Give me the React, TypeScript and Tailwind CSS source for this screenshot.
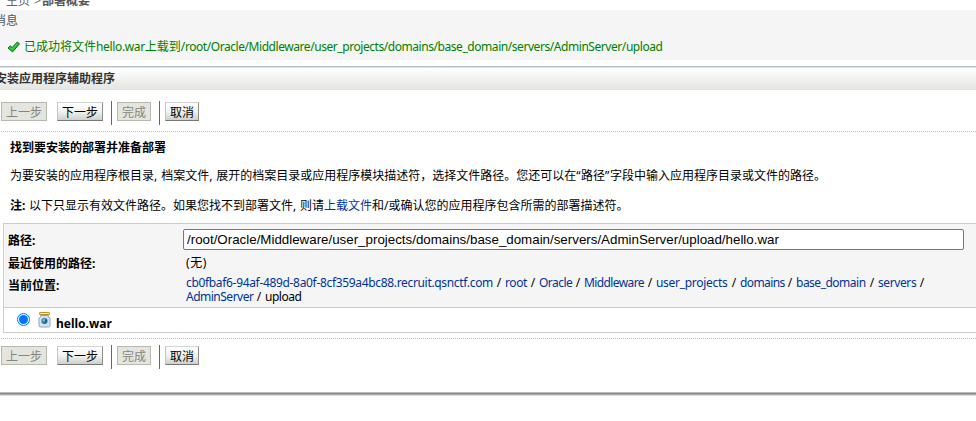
import React from "react";

const latin = "[font-family:'Noto_Sans','Noto_Sans_CJK_SC',sans-serif]";

function Divider() {
  return <div className="h-6 w-px bg-[#666]" />;
}

function WizardButton({ label, disabled, className }: { label: string; disabled?: boolean; className: string }) {
  const tone = disabled
    ? "border-[#b7b9b0] bg-[#e4e5de] text-[#83857e]"
    : "border-t-[#d4d4d0] border-l-[#c5c5c0] border-r-[#8e8e8a] border-b-[#777] bg-linear-to-b from-white via-[#f2f2f0] to-[#cfd0c9] text-black";
  return (
    <button
      type="button"
      disabled={disabled}
      className={`mt-px flex h-[19px] items-center justify-center border pt-[2px] text-[12px] leading-none ${tone} ${className}`}
    >
      {label}
    </button>
  );
}

function ButtonBar() {
  return (
    <div className="flex h-6 items-start pl-px">
      <WizardButton label="上一步" disabled className="w-[46px]" />
      <WizardButton label="下一步" className="ml-[10px] w-[46px]" />
      <div className="ml-2"><Divider /></div>
      <WizardButton label="完成" disabled className="ml-[5px] w-[34px]" />
      <div className="ml-2"><Divider /></div>
      <WizardButton label="取消" className="ml-[5px] w-[34px]" />
    </div>
  );
}

function DottedLine() {
  return <div className="h-px bg-[repeating-linear-gradient(90deg,transparent_0_1px,#bbb_1px_2px)]" />;
}

function CheckIcon() {
  return (
    <svg width="13" height="12" viewBox="0 0 13 12">
      <path d="M1 7 3.2 4.9l2 1.6L10.3 1 12.5 2.8 5.6 10.9Z" fill="#1fc02c" stroke="#08701a" strokeWidth="1" strokeLinejoin="round" />
      <path d="m2.4 6.7 2.9 1.8 5.2-6" fill="none" stroke="#5ae04e" strokeWidth=".8" />
    </svg>
  );
}

function JarIcon() {
  return (
    <svg width="13" height="16" viewBox="0 0 13 16">
      <path d="M2.5 3.5h8v1.2l1.5 1.5v7.2q0 1.6-1.6 1.6H2.6Q1 15 1 13.4V6.2l1.5-1.5Z" fill="#d3e3f3" stroke="#8ba3c0" />
      <rect x="1.5" y=".5" width="10" height="2" rx=".5" fill="#fbe9b0" stroke="#c0912a" />
      <circle cx="6.5" cy="9" r="3.1" fill="#2f7f9c" />
      <path d="M4.3 8q1.8-1.7 2.6-.7T5.9 9.9Z" fill="#7cc9c4" />
      <path d="M7.2 7.3 9 8.8 7.6 11Z" fill="#174b78" />
    </svg>
  );
}

const crumbs = [
  { name: "cb0fbaf6-94af-489d-8a0f-8cf359a4bc88.recruit.qsnctf.com", width: "w-[307px] tracking-[-0.33px]" },
  { name: "root", width: "w-[22px] tracking-[-0.4px]" },
  { name: "Oracle", width: "w-[33px] tracking-[-0.55px]" },
  { name: "Middleware", width: "w-[60px] tracking-[-0.6px]" },
  { name: "user_projects", width: "w-[72px] tracking-[-0.3px]" },
  { name: "domains", width: "w-[44px] tracking-[-0.6px]" },
  { name: "base_domain", width: "w-[70px] tracking-[-0.5px]" },
  { name: "servers", width: "w-[38px] tracking-[-0.4px]" },
];

export default function App() {
  return (
    <main className={`h-[421px] w-[976px] overflow-hidden bg-white text-[12px] text-black ${latin}`}>
      <div className="h-[10px] overflow-hidden">
        <div className="-mt-2 flex h-[18px] items-center pl-[6px] leading-[18px] whitespace-pre text-[#666]">
          主页 <span className="ml-px">&gt;</span><b className="ml-px text-[#555]">部署概要</b>
        </div>
      </div>
      <section className="h-[50px] bg-[#f5f5f5]">
        <h2 className="-ml-[6px] flex h-[22px] items-center text-[#555]">消息</h2>
        <div className="flex h-[30px] items-center pl-[7px] text-[#008000]">
          <CheckIcon />
          <span className="ml-1 whitespace-nowrap">已成功将文件</span>
          <span className="tracking-[-0.35px]">hello.war</span>
          <span>上载到</span>
          <span className="tracking-[-0.44px]">/root/Oracle/Middleware/user_projects/domains/base_domain/servers/AdminServer/upload</span>
        </div>
      </section>
      <div className="mt-[6px] h-px bg-[#b7c0c5]" />
      <div className="h-px bg-[#dce0e3]" />
      <header className="flex h-[22px] items-center overflow-hidden border-b border-[#dedfdb] bg-linear-to-b from-white to-[#e4e6e3]">
        <h1 className="-ml-[5px] font-bold whitespace-nowrap text-[#333]">安装应用程序辅助程序</h1>
      </header>
      <div className="h-[41px] pt-[11px]"><ButtonBar /></div>
      <DottedLine />
      <section className="h-[91px] pt-[6px] pl-[10px] whitespace-nowrap">
        <h2 className="flex h-5 items-center font-bold">找到要安装的部署并准备部署</h2>
        <p className="mt-2 h-5 leading-5 [word-spacing:0.8px]">为要安装的应用程序根目录, 档案文件, 展开的档案目录或应用程序模块描述符，选择文件路径。您还可以在<span className="tracking-[0.5px]">“</span>路径<span className="tracking-[0.5px]">”</span>字段中输入应用程序目录或文件的路径。</p>
        <p className="mt-[10px] h-5 leading-5 [word-spacing:0.6px]"><b>注:</b> 以下只显示有效文件路径。如果您找不到部署文件, 则请<a className="text-[#039]">上载文件</a>和/或确认您的应用程序包含所需的部署描述符。</p>
      </section>
      <section className="ml-[3px] h-[110px] border border-r-0 border-[#ccc]">
        <div className="flex h-[84px] border-b border-[#ccc] bg-[#f5f5f5] pl-1">
          <div className="w-[175px] pt-[7px] font-bold">
            <div className="h-5 leading-5">路径:</div>
            <div className="mt-[3px] h-5 leading-5">最近使用的路径:</div>
            <div className="mt-[2px] h-5 leading-5">当前位置:</div>
          </div>
          <div className="pt-[5px]">
            <input
              readOnly
              value="/root/Oracle/Middleware/user_projects/domains/base_domain/servers/AdminServer/upload/hello.war"
              className="block h-[21px] w-[781px] rounded-[2px] border border-[#767676] bg-white px-[3px] text-[13.333px] [font-family:'Liberation_Sans',sans-serif]"
            />
            <div className="mt-[3px] ml-[3px] h-[19px] leading-5 tracking-[0.6px]">(无)</div>
            <div className="mt-1 ml-[3px] flex h-[14px] items-center leading-[14px] whitespace-pre">
              {crumbs.map((crumb) => (
                <React.Fragment key={crumb.name}>
                  <a className={`flex-none text-[#039] ${crumb.width}`}>{crumb.name}</a>
                  <span className="w-3 flex-none text-center">/</span>
                </React.Fragment>
              ))}
            </div>
            <div className="ml-[3px] flex h-[14px] leading-[14px]">
              <a className="w-[67px] tracking-[-0.5px] text-[#039]">AdminServer</a>
              <span className="w-3 text-center">/</span>
              <span className="tracking-[-0.5px]">upload</span>
            </div>
          </div>
        </div>
        <div className="flex h-6 items-start">
          <span className="mt-[5px] ml-[13px] flex h-[13px] w-[13px] items-center justify-center rounded-full border border-[#0075ff] bg-white">
            <span className="h-[9px] w-[9px] rounded-full bg-[#0075ff]" />
          </span>
          <span className="mt-1 ml-2"><JarIcon /></span>
          <b className="mt-[6px] ml-[5px] leading-5">hello.war</b>
        </div>
      </section>
      <div className="mt-[5px]"><DottedLine /></div>
      <div className="pt-[6px]"><ButtonBar /></div>
      <div className="mt-[23px] h-1 bg-[linear-gradient(#b8baba_0_1px,#858887_1px_2px,#aaa_2px_3px,#ddd_3px_4px)]" />
    </main>
  );
}
